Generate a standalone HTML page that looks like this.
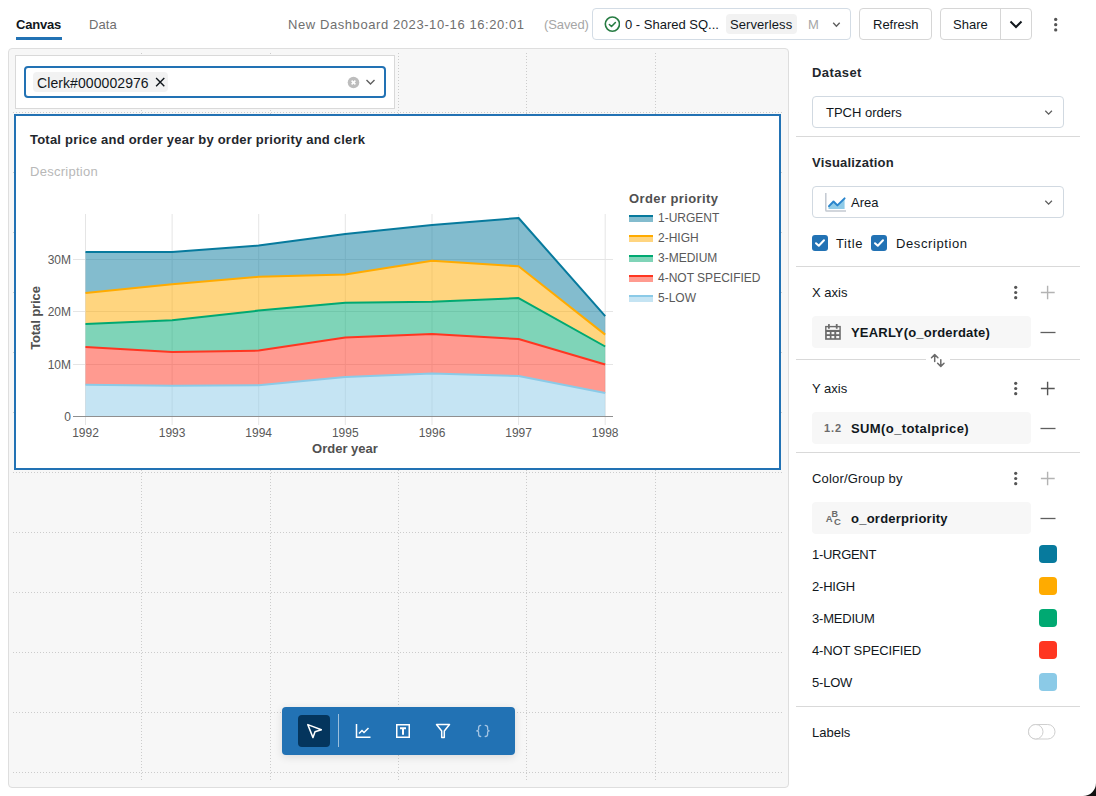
<!DOCTYPE html>
<html><head><meta charset="utf-8">
<style>
*{box-sizing:border-box;margin:0;padding:0}
html,body{width:1096px;height:796px;overflow:hidden;background:#fff}
body{position:relative;font-family:"Liberation Sans",sans-serif;font-size:13px;color:#11171c}
.a{position:absolute;white-space:nowrap}
.t{position:absolute;white-space:nowrap;line-height:16px}
.btn{position:absolute;border:1px solid #d6d6d6;border-radius:4px;background:#fff}
.sep{position:absolute;height:1px;background:#d9d9d9}
.pill{position:absolute;background:#f7f7f7;border-radius:4px}
.sw{position:absolute;width:18px;height:18px;border-radius:4px}
</style></head><body>

<!-- TOP BAR -->
<div class="t" style="left:16px;top:17px;font-weight:700;letter-spacing:-0.2px;color:#11171c">Canvas</div>
<div class="a" style="left:16px;top:37px;width:46px;height:3px;background:#2272b4"></div>
<div class="t" style="left:89px;top:17px;color:#6f6f6f;letter-spacing:0.1px">Data</div>

<div class="t" style="left:288px;top:17px;color:#6f6f6f;letter-spacing:0.58px">New Dashboard 2023-10-16 16:20:01</div>
<div class="t" style="left:544px;top:17px;color:#a6a6a6;letter-spacing:-0.1px">(Saved)</div>

<div class="btn" style="left:592px;top:8px;width:259px;height:32px;border-color:#d3dce5"></div>
<svg class="a" style="left:604px;top:16px" width="16" height="16" viewBox="0 0 16 16"><circle cx="8.4" cy="8.1" r="7.1" fill="none" stroke="#277c43" stroke-width="1.6"/><path d="M5.4 8.5 L7.5 10.5 L11.4 6.5" fill="none" stroke="#277c43" stroke-width="1.6" stroke-linecap="round" stroke-linejoin="round"/></svg>
<div class="t" style="left:625px;top:17px;color:#11171c">0 - Shared SQ...</div>
<div class="a" style="left:726px;top:14px;width:71px;height:20px;background:#f2f2f2;border-radius:4px"></div>
<div class="t" style="left:730px;top:17px;color:#11171c;letter-spacing:0.08px">Serverless</div>
<div class="t" style="left:808px;top:17px;color:#a6a6a6">M</div>
<svg class="a" style="left:830px;top:19px" width="12" height="10" viewBox="0 0 12 10"><path d="M3.2 3.8 L6.4 7.2 L9.7 3.8" fill="none" stroke="#5f5f5f" stroke-width="1.4"/></svg>

<div class="btn" style="left:859px;top:8px;width:73px;height:32px"></div>
<div class="t" style="left:873px;top:17px;color:#11171c">Refresh</div>
<div class="btn" style="left:940px;top:8px;width:92px;height:32px"></div>
<div class="a" style="left:1000px;top:9px;width:1px;height:30px;background:#d6d6d6"></div>
<div class="t" style="left:953px;top:17px;color:#11171c">Share</div>
<svg class="a" style="left:1008px;top:17px" width="16" height="14" viewBox="0 0 16 14"><path d="M2.5 4.5 L8 10 L13.5 4.5" fill="none" stroke="#11171c" stroke-width="2"/></svg>
<svg class="a" style="left:1051px;top:16px" width="10" height="16" viewBox="0 0 10 16"><circle cx="4.7" cy="3.4" r="1.65" fill="#555"/><circle cx="4.7" cy="8.7" r="1.65" fill="#555"/><circle cx="4.7" cy="13.9" r="1.65" fill="#555"/></svg>

<!-- CANVAS -->
<div class="a" style="left:8px;top:48px;width:781px;height:740px;background:#f7f7f7;border:1px solid #dedede;border-radius:4px"></div>
<svg class="a" style="left:0;top:0" width="800" height="796">
 <g stroke="#cccccc" stroke-width="1" stroke-dasharray="1 2">
  <path d="M141.5 53V781M270.5 53V781M398.5 53V781M526.5 53V781M655.5 53V781M13 112.5H783M13 172.5H783M13 232.5H783M13 292.5H783M13 352.5H783M13 412.5H783M13 472.5H783M13 532.5H783M13 592.5H783M13 652.5H783M13 712.5H783M13 772.5H783"/>
 </g>
</svg>


<!-- FILTER WIDGET -->
<div class="a" style="left:15px;top:55px;width:380px;height:54px;background:#fff;border:1px solid #d9d9d9"></div>
<div class="a" style="left:24px;top:66px;width:362px;height:32px;border:2px solid #2272b4;border-radius:4px;background:#fff"></div>
<div class="a" style="left:33px;top:72px;width:135px;height:20px;background:#f2f2f2;border-radius:4px"></div>
<div class="t" style="left:37px;top:75px;font-size:14px;letter-spacing:0.08px;color:#11171c">Clerk#000002976</div>
<svg class="a" style="left:155px;top:77px" width="11" height="11" viewBox="0 0 11 11"><path d="M1.1 1.1L9.3 9.3M9.3 1.1L1.1 9.3" stroke="#11171c" stroke-width="1.4"/></svg>
<svg class="a" style="left:347px;top:76px" width="13" height="13" viewBox="0 0 13 13"><circle cx="6.5" cy="6.5" r="5.8" fill="#bdbdbd"/><path d="M4.6 4.6L8.4 8.4M8.4 4.6L4.6 8.4" stroke="#fff" stroke-width="1.5"/></svg>
<svg class="a" style="left:365px;top:78px" width="11" height="8" viewBox="0 0 11 8"><path d="M1.5 2 L5.5 6 L9.5 2" fill="none" stroke="#5f5f5f" stroke-width="1.4"/></svg>

<!-- CHART WIDGET -->
<div class="a" style="left:14px;top:114px;width:767px;height:356px;background:#fff;border:2px solid #2272b4"></div>
<div class="t" style="left:30px;top:132px;font-weight:700;letter-spacing:0.22px;color:#1f272d">Total price and order year by order priority and clerk</div>
<div class="t" style="left:30px;top:164px;color:#b8b8b8;letter-spacing:0.27px">Description</div>
<svg class="a" style="left:0;top:0" width="800" height="796">
<g stroke="#e5e5e5" stroke-width="1" fill="none"><path d="M73 259.5H613"/><path d="M73 311.5H613"/><path d="M73 364.5H613"/><path d="M85.5 214V425"/><path d="M172.1 214V425"/><path d="M258.7 214V425"/><path d="M345.3 214V425"/><path d="M432.0 214V425"/><path d="M518.6 214V425"/><path d="M605.2 214V425"/></g>
<polygon points="85.5,252.1 172.1,252.0 258.7,245.6 345.3,234.0 432.0,224.9 518.6,218.0 605.2,316.1 605.2,334.6 518.6,266.3 432.0,260.8 345.3,274.6 258.7,276.8 172.1,284.3 85.5,292.9" fill="#077A9D" fill-opacity="0.5"/>
<polygon points="85.5,292.9 172.1,284.3 258.7,276.8 345.3,274.6 432.0,260.8 518.6,266.3 605.2,334.6 605.2,346.5 518.6,298.1 432.0,301.7 345.3,302.8 258.7,310.6 172.1,320.2 85.5,324.0" fill="#FFAB00" fill-opacity="0.5"/>
<polygon points="85.5,324.0 172.1,320.2 258.7,310.6 345.3,302.8 432.0,301.7 518.6,298.1 605.2,346.5 605.2,364.5 518.6,339.0 432.0,334.0 345.3,337.6 258.7,350.6 172.1,352.0 85.5,347.0" fill="#00A972" fill-opacity="0.5"/>
<polygon points="85.5,347.0 172.1,352.0 258.7,350.6 345.3,337.6 432.0,334.0 518.6,339.0 605.2,364.5 605.2,392.9 518.6,376.1 432.0,373.6 345.3,376.9 258.7,385.2 172.1,385.7 85.5,384.7" fill="#FF3621" fill-opacity="0.5"/>
<polygon points="85.5,384.7 172.1,385.7 258.7,385.2 345.3,376.9 432.0,373.6 518.6,376.1 605.2,392.9 605.2,416.0 518.6,416.0 432.0,416.0 345.3,416.0 258.7,416.0 172.1,416.0 85.5,416.0" fill="#8BCAE7" fill-opacity="0.5"/>
<path d="M73 416.5H613" stroke="#8f8f8f" stroke-width="1"/>
<polyline points="85.5,384.7 172.1,385.7 258.7,385.2 345.3,376.9 432.0,373.6 518.6,376.1 605.2,392.9" fill="none" stroke="#8BCAE7" stroke-width="2" stroke-linejoin="round"/>
<polyline points="85.5,347.0 172.1,352.0 258.7,350.6 345.3,337.6 432.0,334.0 518.6,339.0 605.2,364.5" fill="none" stroke="#FF3621" stroke-width="2" stroke-linejoin="round"/>
<polyline points="85.5,324.0 172.1,320.2 258.7,310.6 345.3,302.8 432.0,301.7 518.6,298.1 605.2,346.5" fill="none" stroke="#00A972" stroke-width="2" stroke-linejoin="round"/>
<polyline points="85.5,292.9 172.1,284.3 258.7,276.8 345.3,274.6 432.0,260.8 518.6,266.3 605.2,334.6" fill="none" stroke="#FFAB00" stroke-width="2" stroke-linejoin="round"/>
<polyline points="85.5,252.1 172.1,252.0 258.7,245.6 345.3,234.0 432.0,224.9 518.6,218.0 605.2,316.1" fill="none" stroke="#077A9D" stroke-width="2" stroke-linejoin="round"/>
</svg>
<div class="t" style="left:30px;top:252px;width:41px;text-align:right;font-size:12px;color:#595959">30M</div>
<div class="t" style="left:30px;top:304px;width:41px;text-align:right;font-size:12px;color:#595959">20M</div>
<div class="t" style="left:30px;top:357px;width:41px;text-align:right;font-size:12px;color:#595959">10M</div>
<div class="t" style="left:30px;top:409px;width:41px;text-align:right;font-size:12px;color:#595959">0</div>
<div class="t" style="left:65.5px;top:425px;width:40px;text-align:center;font-size:12px;color:#595959">1992</div>
<div class="t" style="left:152.1px;top:425px;width:40px;text-align:center;font-size:12px;color:#595959">1993</div>
<div class="t" style="left:238.7px;top:425px;width:40px;text-align:center;font-size:12px;color:#595959">1994</div>
<div class="t" style="left:325.3px;top:425px;width:40px;text-align:center;font-size:12px;color:#595959">1995</div>
<div class="t" style="left:412px;top:425px;width:40px;text-align:center;font-size:12px;color:#595959">1996</div>
<div class="t" style="left:498.6px;top:425px;width:40px;text-align:center;font-size:12px;color:#595959">1997</div>
<div class="t" style="left:585.2px;top:425px;width:40px;text-align:center;font-size:12px;color:#595959">1998</div>
<div class="t" style="left:295px;top:441px;width:100px;text-align:center;font-weight:700;color:#505050">Order year</div>
<div class="t" style="left:-14px;top:310px;width:100px;text-align:center;font-weight:700;color:#505050;letter-spacing:-0.1px;transform:rotate(-90deg)">Total price</div>
<div class="t" style="left:629px;top:191px;font-weight:700;color:#505050;letter-spacing:0.4px">Order priority</div>
<div class="a" style="left:629px;top:215px;width:24px;height:7px;background:#83bcce;border-top:2px solid #077A9D"></div>
<div class="a" style="left:629px;top:235px;width:24px;height:7px;background:#ffd580;border-top:2px solid #FFAB00"></div>
<div class="a" style="left:629px;top:255px;width:24px;height:7px;background:#80d4b8;border-top:2px solid #00A972"></div>
<div class="a" style="left:629px;top:275px;width:24px;height:7px;background:#ff9b90;border-top:2px solid #FF3621"></div>
<div class="a" style="left:629px;top:295px;width:24px;height:7px;background:#c5e4f3;border-top:2px solid #8BCAE7"></div>
<div class="t" style="left:658px;top:210px;font-size:12px;color:#595959">1-URGENT</div>
<div class="t" style="left:658px;top:230px;font-size:12px;color:#595959">2-HIGH</div>
<div class="t" style="left:658px;top:250px;font-size:12px;color:#595959">3-MEDIUM</div>
<div class="t" style="left:658px;top:270px;font-size:12px;color:#595959">4-NOT SPECIFIED</div>
<div class="t" style="left:658px;top:290px;font-size:12px;color:#595959">5-LOW</div>

<!-- TOOLBAR -->
<div class="a" style="left:282px;top:707px;width:233px;height:48px;background:#2272b4;border-radius:4px;box-shadow:0 2px 8px rgba(0,0,0,0.12)"></div>
<div class="a" style="left:298px;top:715px;width:32px;height:32px;background:#04355d;border-radius:4px"></div>
<svg class="a" style="left:306px;top:723px" width="16" height="16" viewBox="0 0 16 16"><path d="M1.8 1.6 L15.4 6.7 L9 8.7 L7 14.6 Z" fill="none" stroke="#fff" stroke-width="1.5" stroke-linejoin="round"/></svg>
<div class="a" style="left:338px;top:714px;width:1px;height:33px;background:rgba(255,255,255,0.55)"></div>
<svg class="a" style="left:355px;top:723px" width="16" height="16" viewBox="0 0 16 16"><path d="M1.5 1 V14.3 H15.5" fill="none" stroke="#fff" stroke-width="1.5"/><path d="M4 10.5 L7 7.5 L9 9.5 L13.5 5" fill="none" stroke="#fff" stroke-width="1.5"/></svg>
<svg class="a" style="left:395px;top:723px" width="16" height="16" viewBox="0 0 16 16"><rect x="1.75" y="1.75" width="12.5" height="12.5" fill="none" stroke="#fff" stroke-width="1.5"/><path d="M5 5.3H11M8 5.3V11.8" stroke="#fff" stroke-width="2"/></svg>
<svg class="a" style="left:435px;top:723px" width="16" height="16" viewBox="0 0 16 16"><path d="M1.5 1.5 H14.5 L9.3 8 V14.5 H6.7 V8 Z" fill="none" stroke="#fff" stroke-width="1.5" stroke-linejoin="round"/></svg>
<svg class="a" style="left:475px;top:723px" width="16" height="16" viewBox="0 0 16 16"><path d="M5.7 2.3 Q3.6 2.3 3.6 4.5 V6.3 Q3.6 7.8 1.3 7.8 Q3.6 7.8 3.6 9.3 V11.3 Q3.6 13.5 5.7 13.5 M10.2 2.3 Q12.6 2.3 12.6 4.5 V6.3 Q12.6 7.8 14.6 7.8 Q12.6 7.8 12.6 9.3 V11.3 Q12.6 13.5 10.2 13.5" fill="none" stroke="#a3c4e3" stroke-width="1.3" stroke-linecap="round"/></svg>

<!-- RIGHT PANEL -->
<div class="t" style="left:812px;top:65px;font-weight:700;letter-spacing:0.4px;color:#1f272d">Dataset</div>
<div class="btn" style="left:812px;top:96px;width:252px;height:32px;border-color:#d1d9e1"></div>
<div class="t" style="left:826px;top:105px;color:#11171c">TPCH orders</div>
<svg class="a" style="left:1043px;top:107px" width="12" height="10" viewBox="0 0 12 10"><path d="M2.3 3.7 L5.6 7.1 L8.9 3.7" fill="none" stroke="#5f5f5f" stroke-width="1.3"/></svg>
<div class="sep" style="left:796px;top:136px;width:284px"></div>

<div class="t" style="left:812px;top:155px;font-weight:700;letter-spacing:0.2px;color:#1f272d">Visualization</div>
<div class="btn" style="left:812px;top:186px;width:252px;height:32px;border-color:#d1d9e1"></div>
<svg class="a" style="left:824px;top:192px" width="24" height="22" viewBox="0 0 24 22"><path d="M1.8 0.9 V18.2 Q1.8 19 2.6 19 H22" fill="none" stroke="#c3c9d1" stroke-width="1.5"/><path d="M4.5 14.3 L9.5 9.5 L13.4 13.4 L20.6 6.4 V17.1 H4.5 Z" fill="#8fcbe8"/><path d="M5 14.1 L9.5 9.5 L13.4 13.4 L20.6 6.4" fill="none" stroke="#2a85cc" stroke-width="2" stroke-linecap="round" stroke-linejoin="round"/></svg>
<div class="t" style="left:851px;top:195px;color:#11171c">Area</div>
<svg class="a" style="left:1043px;top:197px" width="12" height="10" viewBox="0 0 12 10"><path d="M2.3 3.7 L5.6 7.1 L8.9 3.7" fill="none" stroke="#5f5f5f" stroke-width="1.3"/></svg>

<svg class="a" style="left:812px;top:235px" width="16" height="16" viewBox="0 0 16 16"><rect x="0" y="0" width="16" height="16" rx="3" fill="#2272b4"/><path d="M4 8.2 L6.8 10.8 L12 5.3" fill="none" stroke="#fff" stroke-width="2" stroke-linecap="round" stroke-linejoin="round"/></svg>
<div class="t" style="left:836px;top:236px;color:#11171c;letter-spacing:0.6px">Title</div>
<svg class="a" style="left:871px;top:235px" width="16" height="16" viewBox="0 0 16 16"><rect x="0" y="0" width="16" height="16" rx="3" fill="#2272b4"/><path d="M4 8.2 L6.8 10.8 L12 5.3" fill="none" stroke="#fff" stroke-width="2" stroke-linecap="round" stroke-linejoin="round"/></svg>
<div class="t" style="left:896px;top:236px;color:#11171c;letter-spacing:0.6px">Description</div>
<div class="sep" style="left:796px;top:266px;width:284px"></div>

<div class="t" style="left:812px;top:285px;color:#11171c">X axis</div>
<svg class="a" style="left:1011px;top:285px" width="10" height="16" viewBox="0 0 10 16"><circle cx="4.7" cy="2.3" r="1.6" fill="#555"/><circle cx="4.7" cy="7.5" r="1.6" fill="#555"/><circle cx="4.7" cy="12.7" r="1.6" fill="#555"/></svg>
<svg class="a" style="left:1040px;top:285px" width="16" height="16" viewBox="0 0 16 16"><path d="M7.6 0.8V14.3M0.9 7.5H14.7" stroke="#b3b3b3" stroke-width="1.4"/></svg>
<div class="pill" style="left:812px;top:316px;width:219px;height:32px"></div>
<svg class="a" style="left:824px;top:323px" width="18" height="18" viewBox="0 0 18 18"><rect x="1.1" y="2.9" width="15.7" height="13.9" fill="#6b6b6b"/><rect x="2.5" y="4.3" width="12.9" height="2.6" fill="#f7f7f7"/><rect x="2.8" y="9" width="3.0" height="2.2" fill="#f7f7f7"/><rect x="2.8" y="13" width="3.0" height="2.2" fill="#f7f7f7"/><rect x="7.5" y="9" width="2.8" height="2.2" fill="#f7f7f7"/><rect x="7.5" y="13" width="2.8" height="2.2" fill="#f7f7f7"/><rect x="12.2" y="9" width="3.0" height="2.2" fill="#f7f7f7"/><rect x="12.2" y="13" width="3.0" height="2.2" fill="#f7f7f7"/><rect x="4" y="1.1" width="1.8" height="4.6" rx="0.5" fill="#6b6b6b"/><rect x="11.8" y="1.1" width="1.8" height="4.6" rx="0.5" fill="#6b6b6b"/></svg>
<div class="t" style="left:851px;top:325px;font-weight:700;letter-spacing:0.19px;color:#11171c">YEARLY(o_orderdate)</div>
<svg class="a" style="left:1040px;top:324px" width="16" height="16" viewBox="0 0 16 16"><path d="M0.5 8.5H15.5" stroke="#5f5f5f" stroke-width="1.3"/></svg>
<div class="sep" style="left:796px;top:359px;width:130px"></div>
<div class="sep" style="left:950px;top:359px;width:130px"></div>
<svg class="a" style="left:926px;top:348px" width="24" height="24" viewBox="0 0 24 24"><path d="M8.7 13.4V6.8M5.5 9.8L8.7 6.6L11.9 9.8M14.8 11.8V18.2M11.6 15.2L14.8 18.4L18 15.2" fill="none" stroke="#6b6b6b" stroke-width="1.5" stroke-linecap="round" stroke-linejoin="round"/></svg>

<div class="t" style="left:812px;top:381px;color:#11171c">Y axis</div>
<svg class="a" style="left:1011px;top:381px" width="10" height="16" viewBox="0 0 10 16"><circle cx="4.7" cy="2.3" r="1.6" fill="#555"/><circle cx="4.7" cy="7.5" r="1.6" fill="#555"/><circle cx="4.7" cy="12.7" r="1.6" fill="#555"/></svg>
<svg class="a" style="left:1040px;top:381px" width="16" height="16" viewBox="0 0 16 16"><path d="M7.6 0.8V14.3M0.9 7.5H14.7" stroke="#555" stroke-width="1.4"/></svg>
<div class="pill" style="left:812px;top:412px;width:219px;height:32px"></div>
<div class="t" style="left:824px;top:420px;font-weight:700;font-size:11px;color:#6b6b6b;letter-spacing:0.9px">1.2</div>
<div class="t" style="left:851px;top:421px;font-weight:700;letter-spacing:0.4px;color:#11171c">SUM(o_totalprice)</div>
<svg class="a" style="left:1040px;top:420px" width="16" height="16" viewBox="0 0 16 16"><path d="M0.5 8.5H15.5" stroke="#5f5f5f" stroke-width="1.3"/></svg>
<div class="sep" style="left:796px;top:452px;width:284px"></div>

<div class="t" style="left:812px;top:471px;color:#11171c;letter-spacing:0.18px">Color/Group by</div>
<svg class="a" style="left:1011px;top:471px" width="10" height="16" viewBox="0 0 10 16"><circle cx="4.7" cy="2.3" r="1.6" fill="#555"/><circle cx="4.7" cy="7.5" r="1.6" fill="#555"/><circle cx="4.7" cy="12.7" r="1.6" fill="#555"/></svg>
<svg class="a" style="left:1040px;top:471px" width="16" height="16" viewBox="0 0 16 16"><path d="M7.6 0.8V14.3M0.9 7.5H14.7" stroke="#b3b3b3" stroke-width="1.4"/></svg>
<div class="pill" style="left:812px;top:502px;width:219px;height:32px"></div>
<svg class="a" style="left:824px;top:506px" width="18" height="22" viewBox="0 0 18 22"><text x="1.8" y="15.8" font-family="Liberation Sans" font-weight="700" font-size="9.5" fill="#6b6b6b">A</text><text x="7.6" y="10.7" font-family="Liberation Sans" font-weight="700" font-size="9" fill="#6b6b6b">B</text><text x="10" y="19" font-family="Liberation Sans" font-weight="700" font-size="9.5" fill="#6b6b6b">C</text></svg>
<div class="t" style="left:851px;top:511px;font-weight:700;letter-spacing:0.24px;color:#11171c">o_orderpriority</div>
<svg class="a" style="left:1040px;top:510px" width="16" height="16" viewBox="0 0 16 16"><path d="M0.5 8.5H15.5" stroke="#5f5f5f" stroke-width="1.3"/></svg>

<div class="t" style="left:812px;top:547px;color:#11171c;letter-spacing:-0.3px">1-URGENT</div>
<div class="sw" style="left:1039px;top:545px;background:#077A9D"></div>
<div class="t" style="left:812px;top:579px;color:#11171c;letter-spacing:-0.2px">2-HIGH</div>
<div class="sw" style="left:1039px;top:577px;background:#FFAB00"></div>
<div class="t" style="left:812px;top:611px;color:#11171c;letter-spacing:-0.2px">3-MEDIUM</div>
<div class="sw" style="left:1039px;top:609px;background:#00A972"></div>
<div class="t" style="left:812px;top:643px;color:#11171c;letter-spacing:-0.13px">4-NOT SPECIFIED</div>
<div class="sw" style="left:1039px;top:641px;background:#FF3621"></div>
<div class="t" style="left:812px;top:675px;color:#11171c;letter-spacing:-0.2px">5-LOW</div>
<div class="sw" style="left:1039px;top:673px;background:#8BCAE7"></div>
<div class="sep" style="left:796px;top:706px;width:284px"></div>

<div class="t" style="left:812px;top:725px;color:#11171c">Labels</div>
<svg class="a" style="left:1027px;top:723px" width="30" height="18" viewBox="0 0 30 18"><rect x="1.5" y="1.5" width="26.5" height="14.5" rx="7.25" fill="#fff" stroke="#cfcfcf" stroke-width="1"/><circle cx="8.75" cy="8.75" r="7.25" fill="#fff" stroke="#cfcfcf" stroke-width="1"/></svg>

<!-- window corner -->
<svg class="a" style="left:1083px;top:783px" width="13" height="13" viewBox="0 0 13 13"><path d="M13 0 V13 H0 A13 13 0 0 0 13 0Z" fill="#111"/></svg>
</body></html>
